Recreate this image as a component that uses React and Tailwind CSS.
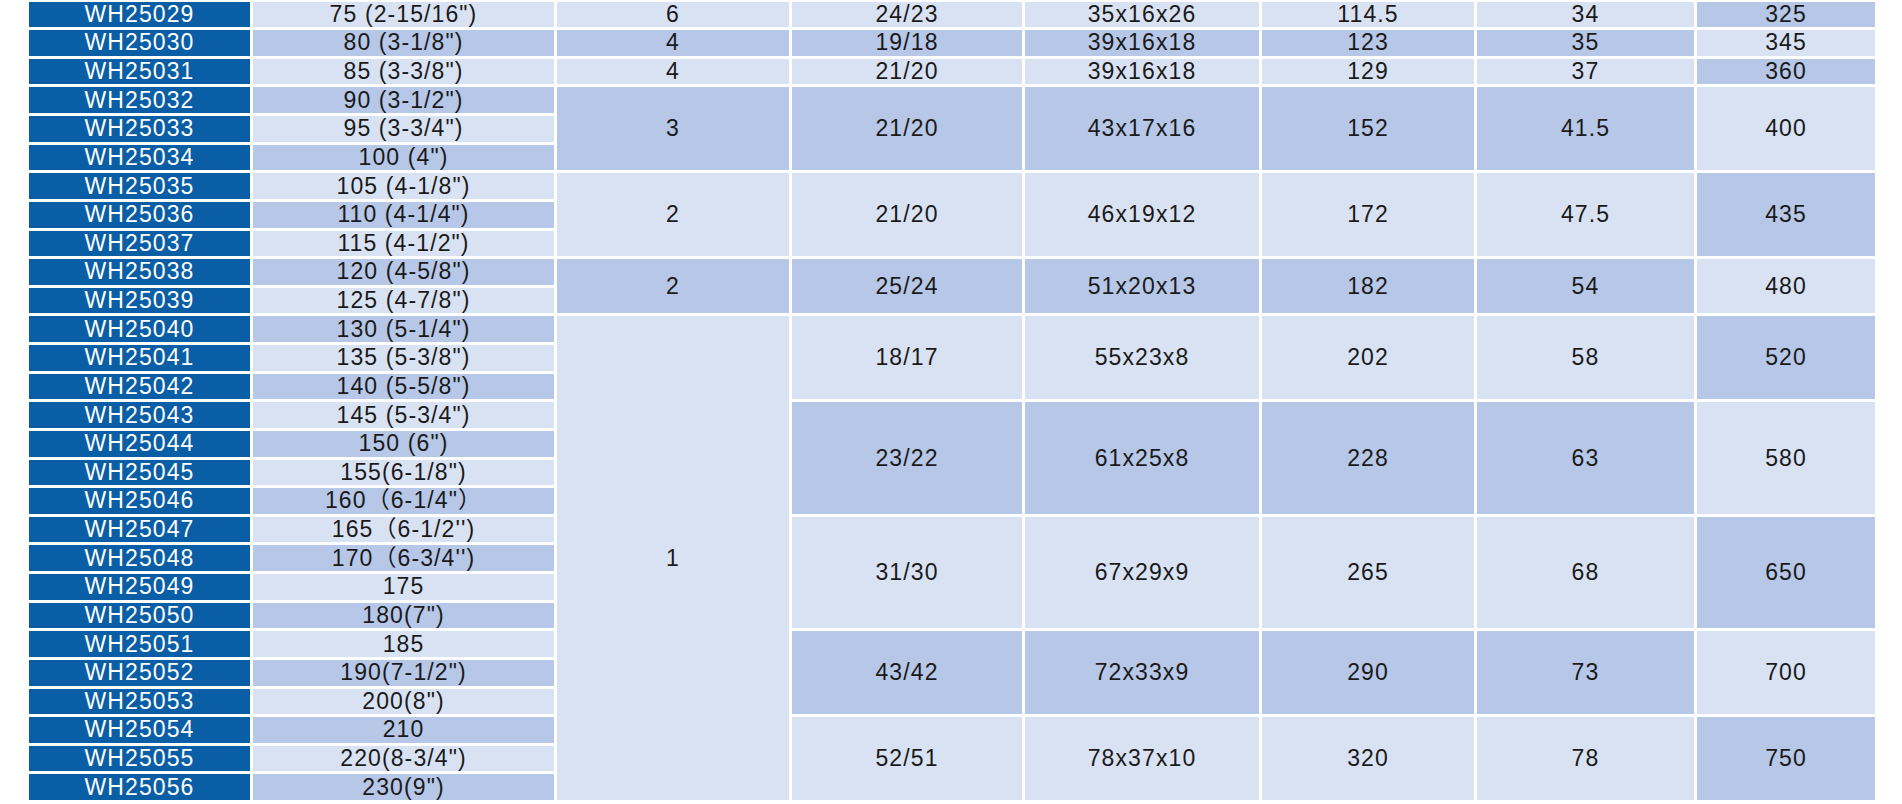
const LIGHT = "bg-[#d9e2f3]";
const DARK = "bg-[#b6c7e7]";

const models = [
  ["WH25029", '75 (2-15/16")'],
  ["WH25030", '80 (3-1/8")'],
  ["WH25031", '85 (3-3/8")'],
  ["WH25032", '90 (3-1/2")'],
  ["WH25033", '95 (3-3/4")'],
  ["WH25034", '100 (4")'],
  ["WH25035", '105 (4-1/8")'],
  ["WH25036", '110 (4-1/4")'],
  ["WH25037", '115 (4-1/2")'],
  ["WH25038", '120 (4-5/8")'],
  ["WH25039", '125 (4-7/8")'],
  ["WH25040", '130 (5-1/4")'],
  ["WH25041", '135 (5-3/8")'],
  ["WH25042", '140 (5-5/8")'],
  ["WH25043", '145 (5-3/4")'],
  ["WH25044", '150 (6")'],
  ["WH25045", '155(6-1/8")'],
  ["WH25046", '160（6-1/4"）'],
  ["WH25047", "165（6-1/2'')"],
  ["WH25048", "170（6-3/4'')"],
  ["WH25049", "175"],
  ["WH25050", '180(7")'],
  ["WH25051", "185"],
  ["WH25052", '190(7-1/2")'],
  ["WH25053", '200(8")'],
  ["WH25054", "210"],
  ["WH25055", '220(8-3/4")'],
  ["WH25056", '230(9")'],
];

// pieces per carton, grouped
const pcs = {
  0: { v: "6", span: 1, dark: false },
  1: { v: "4", span: 1, dark: true },
  2: { v: "4", span: 1, dark: false },
  3: { v: "3", span: 3, dark: true },
  6: { v: "2", span: 3, dark: false },
  9: { v: "2", span: 2, dark: true },
  11: { v: "1", span: 17, dark: false },
};

const groups = {
  0: { span: 1, dark: false, vals: ["24/23", "35x16x26", "114.5", "34", "325"] },
  1: { span: 1, dark: true, vals: ["19/18", "39x16x18", "123", "35", "345"] },
  2: { span: 1, dark: false, vals: ["21/20", "39x16x18", "129", "37", "360"] },
  3: { span: 3, dark: true, vals: ["21/20", "43x17x16", "152", "41.5", "400"] },
  6: { span: 3, dark: false, vals: ["21/20", "46x19x12", "172", "47.5", "435"] },
  9: { span: 2, dark: true, vals: ["25/24", "51x20x13", "182", "54", "480"] },
  11: { span: 3, dark: false, vals: ["18/17", "55x23x8", "202", "58", "520"] },
  14: { span: 4, dark: true, vals: ["23/22", "61x25x8", "228", "63", "580"] },
  18: { span: 4, dark: false, vals: ["31/30", "67x29x9", "265", "68", "650"] },
  22: { span: 3, dark: true, vals: ["43/42", "72x33x9", "290", "73", "700"] },
  25: { span: 3, dark: false, vals: ["52/51", "78x37x10", "320", "78", "750"] },
};

const spans = {
  1: "row-span-1",
  2: "row-span-2",
  3: "row-span-3",
  4: "row-span-4",
  17: "row-span-17",
};

function Cell({ children, bg, span = 1 }) {
  return (
    <div className={`${bg} ${spans[span]} flex items-center justify-center`}>
      {children}
    </div>
  );
}

export default function App() {
  const cells = [];
  models.forEach(([id, size], i) => {
    cells.push(
      <Cell key={`id${i}`} bg="bg-[#0a5ea6] text-white">
        {id}
      </Cell>
    );
    cells.push(
      <Cell key={`sz${i}`} bg={i % 2 ? DARK : LIGHT}>
        {size}
      </Cell>
    );
    if (pcs[i]) {
      const p = pcs[i];
      cells.push(
        <Cell key={`pc${i}`} bg={p.dark ? DARK : LIGHT} span={p.span}>
          {p.v}
        </Cell>
      );
    }
    if (groups[i]) {
      const g = groups[i];
      g.vals.forEach((v, j) => {
        const dark = j === 4 ? !g.dark : g.dark;
        cells.push(
          <Cell key={`g${i}-${j}`} bg={dark ? DARK : LIGHT} span={g.span}>
            {v}
          </Cell>
        );
      });
    }
  });

  return (
    <div className="w-[1902px] h-[804px] bg-white overflow-hidden pl-[29px] pt-[1.5px] font-['Liberation_Sans','Noto_Sans_CJK_SC',sans-serif] text-[23px] tracking-[1.1px] text-[#1a1a1a] leading-none">
      <div className="grid grid-cols-[221px_301px_232px_230px_234px_212px_217px_178px] grid-rows-[repeat(28,25.63px)] gap-[3px] w-max">
        {cells}
      </div>
    </div>
  );
}
